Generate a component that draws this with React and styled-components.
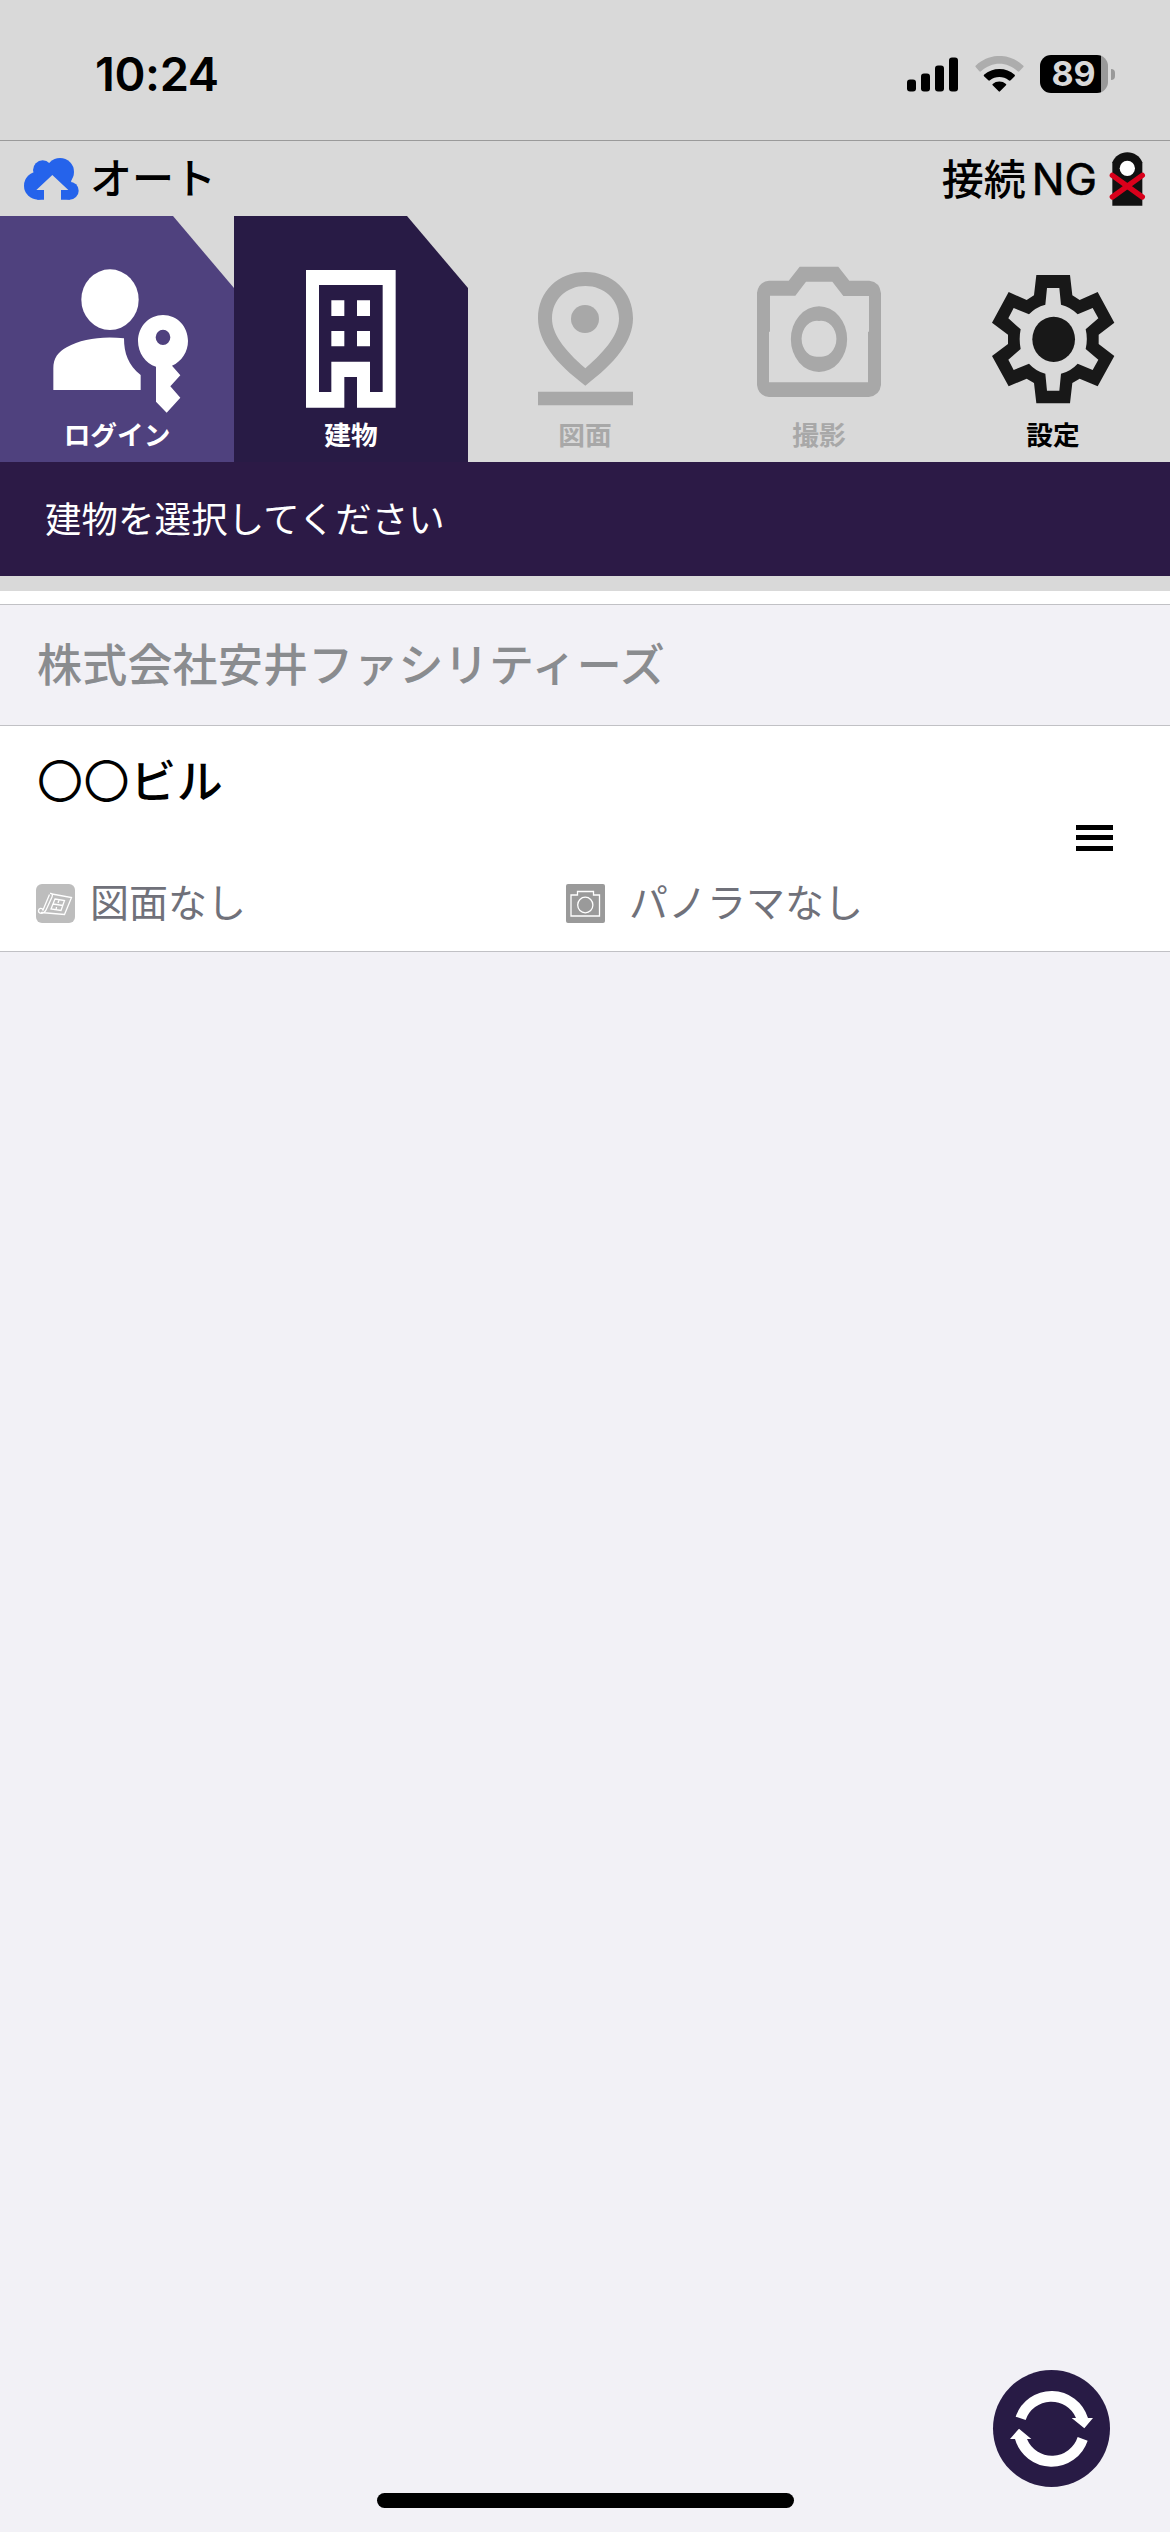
import React from "react";
import styled, { createGlobalStyle } from "styled-components";

const GlobalStyle = createGlobalStyle`
  body {
    margin: 0;
    background: #f2f1f6;
    font-family: Inter, "Noto Sans CJK JP", sans-serif;
  }
`;

const Screen = styled.div`
  display: flex;
  flex-direction: column;
  box-sizing: border-box;
  width: 1170px;
  height: 2532px;
  overflow: hidden;
  background: #f2f1f6;
`;

const Header = styled.header`
  height: 591px;
  background: #d9d9d9;
`;

const StatusBar = styled.div`
  display: flex;
  align-items: flex-start;
  justify-content: space-between;
  box-sizing: border-box;
  height: 141px;
  padding: 44px 55px 0 95px;
  border-bottom: 1px solid #9a9a9a;
`;

const Clock = styled.time`
  font-size: 47px;
  font-weight: 600;
  line-height: 60px;
  letter-spacing: -0.4px;
`;

const StatusIcons = styled.div`
  display: flex;
  align-items: center;
  height: 60px;
`;

const SignalIcon = styled.svg`
  width: 52px;
  height: 35px;
  margin-right: 16px;
`;

const WifiIcon = styled.svg`
  width: 49px;
  height: 36px;
  margin-right: 16px;
`;

const Battery = styled.div`
  display: flex;
  align-items: center;
  justify-content: center;
  box-sizing: border-box;
  width: 68px;
  height: 38px;
  padding-right: 1px;
  border-radius: 11px;
  background: linear-gradient(90deg, #000 61px, #999 61px);
  color: #d9d9d9;
  font-size: 34px;
  font-weight: 700;
  line-height: 38px;
`;

const BatteryCap = styled.div`
  width: 4px;
  height: 11px;
  margin-left: 3px;
  border-radius: 0 4px 4px 0;
  background: #999;
`;

const ConnectionBar = styled.div`
  display: flex;
  align-items: center;
  justify-content: space-between;
  height: 75px;
  padding: 0 25px 0 24px;
  font-size: 42px;
  font-weight: 500;
`;

const Mode = styled.div`
  display: flex;
  align-items: center;
`;

const ModeText = styled.span`
  margin-left: 11px;
  padding-top: 1px;
  line-height: 60px;
`;

const ConnectionText = styled.span`
  margin-right: 13px;
  padding-top: 1px;
  line-height: 60px;
`;

const Latin = styled.span`
  margin-left: 6px;
  font-size: 43.5px;
  font-weight: 400;
  -webkit-text-stroke: 0.6px #000;
`;

const NgIcon = styled.svg`
  width: 35px;
  height: 54px;
  overflow: visible;
`;

const TabList = styled.nav`
  display: grid;
  grid-template-columns: repeat(5, 234px);
  height: 246px;
`;

const Tab = styled.div`
  display: flex;
  flex-direction: column;
  align-items: center;
  background: ${(props) => props.$bg || "transparent"};
  color: ${(props) => props.$color};
  ${(props) =>
    props.$bg &&
    "clip-path: polygon(0 0, 173px 0, 100% 72px, 100% 100%, 0 100%);"}
`;

const TabIcon = styled.svg`
  width: 234px;
  height: 198px;
  fill: currentColor;
`;

const TabLabel = styled.span`
  font-family: "Noto Sans CJK JP", sans-serif;
  font-size: 26.7px;
  font-weight: 700;
  line-height: 40px;
`;

const Message = styled.div`
  display: flex;
  align-items: center;
  box-sizing: border-box;
  height: 114px;
  padding: 0 0 4px 45px;
  background: #2c1a46;
  color: #fff;
  font-size: 36.4px;
  letter-spacing: 0.15px;
`;

const List = styled.main`
  padding-top: 13px;
  background: #fff;
`;

const SectionHeader = styled.h2`
  display: flex;
  align-items: center;
  box-sizing: border-box;
  height: 122px;
  margin: 0;
  padding: 0 0 6px 37px;
  border-top: 1px solid #c1c1c5;
  border-bottom: 1px solid #c1c1c5;
  background: #f2f1f6;
  color: #8a8c8f;
  font-size: 45px;
  font-weight: 500;
  letter-spacing: 0.2px;
`;

const Row = styled.div`
  display: flex;
  align-items: center;
  justify-content: space-between;
  box-sizing: border-box;
  height: 226px;
  padding: 0 57px 0 36px;
  border-bottom: 1px solid #c1c1c5;
`;

const RowBody = styled.div`
  display: flex;
  flex-direction: column;
  justify-content: space-between;
  box-sizing: border-box;
  height: 225px;
  padding: 25px 0 18px;
`;

const BuildingName = styled.div`
  padding-left: 1px;
  font-size: 46px;
  font-weight: 500;
  line-height: 60px;
  letter-spacing: 0.6px;
`;

const Circles = styled.span`
  font-weight: 400;
`;

const Details = styled.div`
  display: grid;
  grid-template-columns: 530px auto;
`;

const Detail = styled.div`
  display: flex;
  align-items: center;
  color: #70717a;
  font-size: 39px;
  line-height: 60px;
`;

const DetailIcon = styled.svg`
  width: 39px;
  height: 39px;
  margin-right: ${(props) => props.$gap}px;
  fill: none;
  stroke: #fff;
  stroke-width: 1.3;
`;

const MenuButton = styled.div`
  display: flex;
  flex-direction: column;
  gap: 5.5px;
  width: 37px;
  margin-bottom: 2px;
`;

const MenuLine = styled.span`
  height: 5px;
  background: #000;
`;

const Footer = styled.footer`
  display: flex;
  flex-direction: column;
  align-items: center;
  margin-top: auto;
  padding-bottom: 24px;
`;

const RefreshButton = styled.div`
  align-self: flex-end;
  width: 117px;
  height: 117px;
  margin: 0 60px 6px 0;
  border-radius: 50%;
  background: #281b45;
`;

const HomeIndicator = styled.div`
  width: 417px;
  height: 15px;
  border-radius: 8px;
  background: #000;
`;

const LoginIcon = () => (
  <TabIcon viewBox="0 18 702 594">
    <ellipse cx="330" cy="269" rx="86" ry="91" />
    <path d="M160 540V475C160 445 175 425 200 412C245 388 300 378 372 385C372 430 385 466 422 495V540Z" />
    <path
      fillRule="evenodd"
      d="M489 315C531 315 564 349 564 393C564 425 545 455 516 467L541 496L511 529L541 563L500 608L468 575V470C436 461 414 428 414 393C414 349 448 315 489 315ZM489 359A22 23 0 1 0 489 405A22 23 0 1 0 489 359Z"
    />
  </TabIcon>
);

const BuildingIcon = () => (
  <TabIcon viewBox="12 18 702 594">
    <path
      fillRule="evenodd"
      d="M228 180H497V593H381V501H343V593H228ZM267 225V546H304V455H420V546H458V225Z"
    />
    <path d="M304 271H343V318H304ZM381 271H420V318H381ZM304 363H343V409H304ZM381 363H420V409H381Z" />
  </TabIcon>
);

const PinIcon = () => (
  <TabIcon viewBox="24 18 702 594">
    <path
      fillRule="evenodd"
      d="M376 527C286 459 234 394 234 325C234 243 296 186 376 186C457 186 519 243 519 325C519 394 466 459 376 527ZM376 475C442 418 477 371 477 325C477 268 432 228 376 228C320 228 276 268 276 325C276 371 310 418 376 475Z"
    />
    <circle cx="375" cy="327" r="42" />
    <path d="M234 545H519V586H234Z" />
  </TabIcon>
);

const CameraIcon = () => (
  <TabIcon viewBox="6 18 702 594">
    <path
      fillRule="evenodd"
      d="M299 170H415L448 212H508Q540 216 543 250V525Q539 557 506 561H207Q175 557 171 525V248Q176 215 207 212H266ZM210 257H286L318 215H397L430 258H507V365H504V517H207V365H210Z"
    />
    <path
      fillRule="evenodd"
      d="M357 289A84 98 0 1 1 357 486A84 98 0 1 1 357 289ZM357 333A46 54 0 1 0 357 440A46 54 0 1 0 357 333Z"
    />
  </TabIcon>
);

const GearIcon = () => (
  <TabIcon viewBox="18 18 702 594">
    <path
      fill="#181818"
      fillRule="evenodd"
      d="M319 195H420L427 256L449 270L503 246L553 338L506 374V402L553 438L503 529L449 506L427 519L420 580H319L312 519L290 506L236 529L186 438L234 402V374L186 338L236 246L290 270L312 256ZM351 234L346 284Q316 292 297 313L251 294L235 325L272 358Q266 387 272 417L235 449L251 480L297 461Q318 484 346 491L351 542H388L393 491Q422 484 443 461L488 480L505 449L467 417Q474 387 467 358L505 325L488 294L443 313Q422 291 393 284L388 234Z"
    />
    <ellipse cx="371" cy="388" rx="64" ry="68" fill="#181818" />
  </TabIcon>
);

const tabs = [
  { label: "ログイン", Icon: LoginIcon, bg: "#4f417e", color: "#fff" },
  { label: "建物", Icon: BuildingIcon, bg: "#281b45", color: "#fff" },
  { label: "図面", Icon: PinIcon, color: "#a8a8a8" },
  { label: "撮影", Icon: CameraIcon, color: "#a8a8a8" },
  { label: "設定", Icon: GearIcon, color: "#000" },
];

const App = () => {
  return (
    <Screen>
      <GlobalStyle />
      <Header>
        <StatusBar>
          <Clock>10:24</Clock>
          <StatusIcons>
            <SignalIcon viewBox="0 0 52 35">
              <rect x="0" y="22.5" width="9" height="12" rx="3" />
              <rect x="14" y="16.5" width="9" height="18" rx="3" />
              <rect x="28" y="8.5" width="9" height="26" rx="3" />
              <rect x="42" y="0.5" width="9" height="34" rx="3" />
            </SignalIcon>
            <WifiIcon viewBox="374 165 147 108">
              <path
                fill="#adadad"
                d="M376 194C417 155 478 155 519 194Q521 196 519 198L507 211Q505 213 502 211C470 181 425 181 392 211Q389 213 387 211L376 198Q374 196 376 194Z"
              />
              <path d="M401 221C427 198 468 198 493 221Q495 224 493 226L481 238Q478 240 475 238C459 225 435 225 419 238Q416 240 414 238L401 226Q399 224 401 221Z" />
              <path d="M427 249C438 239 456 239 467 249Q469 251 467 253L449 271Q447 273 445 271L427 253Q425 251 427 249Z" />
            </WifiIcon>
            <Battery>89</Battery>
            <BatteryCap />
          </StatusIcons>
        </StatusBar>
        <ConnectionBar>
          <Mode>
            <svg width="55" height="42" viewBox="72 466 165 126" fill="#2563eb">
              <circle cx="180" cy="508" r="42" />
              <circle cx="128" cy="502" r="29" />
              <circle cx="114" cy="549" r="42" />
              <circle cx="209" cy="564" r="27" />
              <path d="M112 500L150 482L214 530L209 591H112Z" />
              <path
                fill="#d9d9d9"
                d="M157 517L205 562H183V593H132V562H109Z"
              />
            </svg>
            <ModeText>オート</ModeText>
          </Mode>
          <Mode>
            <ConnectionText>
              接続<Latin>NG</Latin>
            </ConnectionText>
            <NgIcon viewBox="779 453 105 162">
              <path
                fill="#111"
                d="M786 614V484C794 465 811 454 831 454C851 454 868 465 876 484V614Z"
              />
              <circle cx="831" cy="502" r="23" fill="#fff" />
              <path
                d="M786 523L876 588M876 523L786 588"
                stroke="#d9001b"
                strokeWidth="16"
                strokeLinecap="round"
              />
            </NgIcon>
          </Mode>
        </ConnectionBar>
        <TabList>
          {tabs.map(({ label, Icon, bg, color }) => (
            <Tab key={label} $bg={bg} $color={color}>
              <Icon />
              <TabLabel>{label}</TabLabel>
            </Tab>
          ))}
        </TabList>
        <Message>建物を選択してください</Message>
      </Header>
      <List>
        <SectionHeader>株式会社安井ファシリティーズ</SectionHeader>
        <Row>
          <RowBody>
            <BuildingName>
              <Circles>〇〇</Circles>ビル
            </BuildingName>
            <Details>
              <Detail>
                <DetailIcon $gap={15} viewBox="0 0 39 39">
                  <rect width="39" height="39" rx="6" fill="#bdbdbd" stroke="none" />
                  <path d="M14 9.5C16 9 17 11 16 13L10 26C8 30.500 2 30 2.500 26.500C3 24 6 23.500 7 26L13.500 10.500M16 10L35.500 13.500L28.500 30.500L5 28.500" />
                  <path d="M19 15L28.500 16.500L25 26.500L15 25ZM17 20L27 21.500M23 16L22 19M20.500 23L20 26" />
                </DetailIcon>
                図面なし
              </Detail>
              <Detail>
                <DetailIcon $gap={24} viewBox="0 0 39 39">
                  <rect width="39" height="39" rx="2" fill="#9a9a9a" stroke="none" />
                  <path d="M5 11H11.500V7.500H27.500V11H33.500V32H5Z" />
                  <ellipse cx="19.300" cy="21" rx="7.600" ry="7.800" />
                </DetailIcon>
                パノラマなし
              </Detail>
            </Details>
          </RowBody>
          <MenuButton>
            <MenuLine />
            <MenuLine />
            <MenuLine />
          </MenuButton>
        </Row>
      </List>
      <Footer>
        <RefreshButton>
          <svg width="117" height="117" viewBox="99 90 351 351" fill="#fff">
            <path d="M167 230A114 114 0 0 1 384 234H399L373 265L335 234H348A81 81 0 0 0 197 240Z" />
            <path d="M383 302A114 114 0 0 1 165 297H150L177 266L214 297H201A81 81 0 0 0 353 291Z" />
          </svg>
        </RefreshButton>
        <HomeIndicator />
      </Footer>
    </Screen>
  );
};

export default App;
